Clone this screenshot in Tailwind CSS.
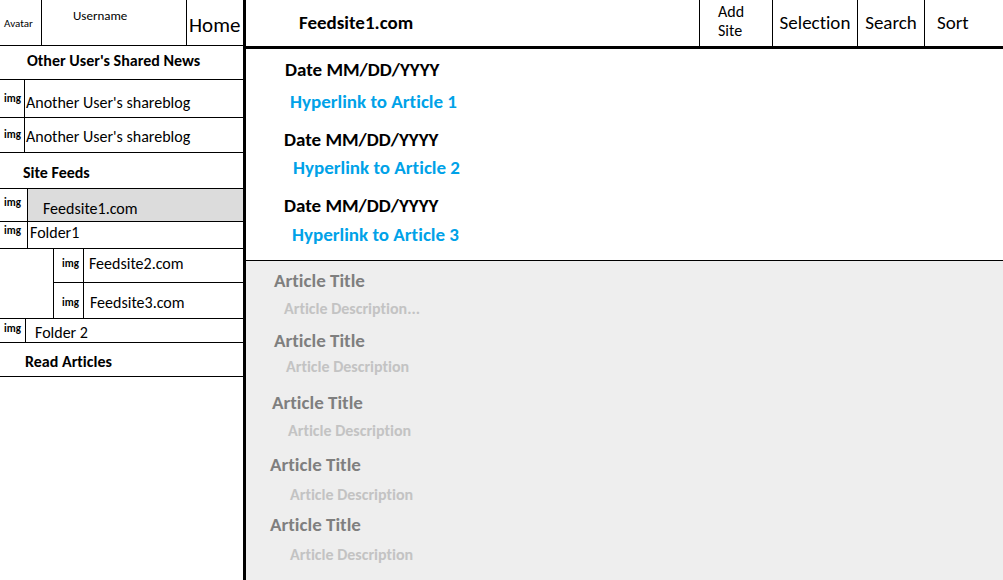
<!DOCTYPE html>
<html lang="en">
<head>
<meta charset="utf-8">
<title>Feed reader</title>
<script src="https://cdn.jsdelivr.net/npm/@tailwindcss/browser@4"></script>
</head>
<body class="flex min-h-screen bg-white font-[Carlito,Lato,sans-serif] text-black [font-variant-ligatures:none]">
<aside class="w-[246px] shrink-0 border-r-3 border-black text-base leading-5">
  <header class="flex h-[46px] border-b border-black">
    <div class="w-[42px] shrink-0 border-r border-black pt-4 pl-1 text-[11px] leading-4">Avatar</div>
    <div class="flex-1 pt-2 pl-[31px] text-[13px] leading-4">Username</div>
    <a href="#" class="flex w-[57px] items-center border-l border-black pt-1 pl-0.5 text-[21px] leading-6">Home</a>
  </header>
  <h2 class="flex h-[34px] items-center border-b border-black pl-[27px] pb-1 font-bold">Other User's Shared News</h2>
  <ul>
    <li class="flex h-[38px] border-b border-black">
      <span class="flex w-[25px] items-center border-r border-black pl-1 text-[11px] font-bold">img</span>
      <a href="#" class="flex flex-1 items-center pt-2 pl-px">Another User's shareblog</a>
    </li>
    <li class="flex h-[35px] border-b border-black">
      <span class="flex w-[25px] items-center border-r border-black pl-1 text-[11px] font-bold">img</span>
      <a href="#" class="flex flex-1 items-center pt-1 pl-px">Another User's shareblog</a>
    </li>
  </ul>
  <h2 class="flex h-[36px] items-center border-b border-black pt-1 pl-[23px] font-bold">Site Feeds</h2>
  <ul>
    <li class="flex h-[33px] border-b border-black">
      <span class="flex w-[28px] items-center border-r border-black pb-1 pl-1 text-[11px] font-bold">img</span>
      <a href="#" aria-current="page" class="flex flex-1 items-center bg-[#dcdcdc] pt-2 pl-[15px]">Feedsite1.com</a>
    </li>
    <li>
      <div class="flex h-[27px] border-b border-black">
        <span class="flex w-[28px] items-center border-r border-black pb-2 pl-1 text-[11px] font-bold">img</span>
        <a href="#" class="flex flex-1 items-center pb-1 pl-0.5">Folder1</a>
      </div>
      <ul class="flex flex-col border-b border-black pl-[53px]">
        <li class="flex h-[34px] border-b border-l border-black">
          <span class="flex w-[30px] items-center border-r border-black pb-1 pl-2 text-[11px] font-bold">img</span>
          <a href="#" class="flex flex-1 items-center pb-1 pl-[5px]">Feedsite2.com</a>
        </li>
        <li class="flex h-[35px] border-l border-black">
          <span class="flex w-[30px] items-center border-r border-black pt-1 pl-2 text-[11px] font-bold">img</span>
          <a href="#" class="flex flex-1 items-center pt-1 pl-[6px]">Feedsite3.com</a>
        </li>
      </ul>
    </li>
    <li class="flex h-[24px] border-b border-black">
      <span class="flex w-[26px] items-center border-r border-black pb-1 pl-1 text-[11px] font-bold">img</span>
      <a href="#" class="flex flex-1 items-center pt-1 pl-[9px]">Folder 2</a>
    </li>
  </ul>
  <h2 class="flex h-[34px] items-center border-b border-black pt-1 pl-[25px] font-bold">Read Articles</h2>
</aside>
<div class="flex min-w-0 flex-1 flex-col">
  <header class="flex h-[49px] border-b-3 border-black text-[19px] leading-6">
    <h1 class="flex flex-1 items-center pl-[53px] font-bold">Feedsite1.com</h1>
    <button type="button" class="w-[73px] border-l border-black pb-1 pl-[18px] text-left text-base leading-[19px]">Add<br>Site</button>
    <button type="button" class="w-[85px] border-l border-black">Selection</button>
    <button type="button" class="w-[67px] border-l border-black">Search</button>
    <button type="button" class="w-[79px] border-l border-black pl-3 text-left">Sort</button>
  </header>
  <main class="flex flex-1 flex-col text-[19px] leading-6 font-bold">
    <section class="border-b border-black pt-[9px] pb-[13px]">
      <article>
        <h2 class="pl-[39px]">Date MM/DD/YYYY</h2>
        <a href="#" class="mt-2 block pl-11 text-[#00a2e8]">Hyperlink to Article 1</a>
      </article>
      <article class="mt-[14px]">
        <h2 class="pl-[38px]">Date MM/DD/YYYY</h2>
        <a href="#" class="mt-1 block pl-[47px] text-[#00a2e8]">Hyperlink to Article 2</a>
      </article>
      <article class="mt-[14px]">
        <h2 class="pl-[38px]">Date MM/DD/YYYY</h2>
        <a href="#" class="mt-[5px] block pl-[46px] text-[#00a2e8]">Hyperlink to Article 3</a>
      </article>
    </section>
    <section class="flex-1 bg-[#eeeeee] pt-2 text-[#7f7f7f]">
      <article>
        <h3 class="pl-7">Article Title</h3>
        <p class="mt-1.5 pl-[38px] text-base leading-5 text-[#c3c3c3]">Article Description...</p>
      </article>
      <article class="mt-2.5">
        <h3 class="pl-7">Article Title</h3>
        <p class="mt-1 pl-10 text-base leading-5 text-[#c3c3c3]">Article Description</p>
      </article>
      <article class="mt-3.5">
        <h3 class="pl-[26px]">Article Title</h3>
        <p class="mt-1.5 pl-[42px] text-base leading-5 text-[#c3c3c3]">Article Description</p>
      </article>
      <article class="mt-3">
        <h3 class="pl-6">Article Title</h3>
        <p class="mt-2 pl-11 text-base leading-5 text-[#c3c3c3]">Article Description</p>
      </article>
      <article class="mt-2">
        <h3 class="pl-6">Article Title</h3>
        <p class="mt-2 pl-11 text-base leading-5 text-[#c3c3c3]">Article Description</p>
      </article>
    </section>
  </main>
</div>
</body>
</html>
